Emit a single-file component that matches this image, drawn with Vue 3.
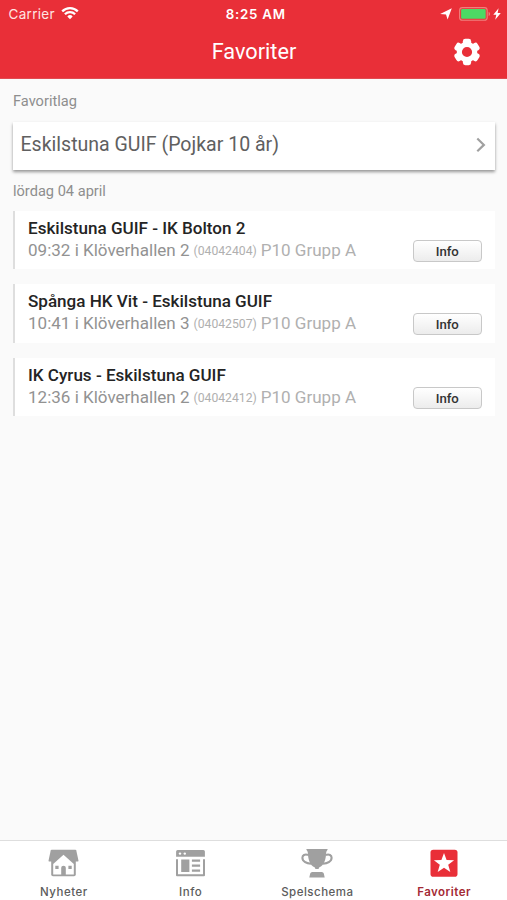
<script setup>
const matches = [
  { teams: 'Eskilstuna GUIF - IK Bolton 2', place: '09:32 i Klöverhallen 2', id: '(04042404)', group: 'P10 Grupp A' },
  { teams: 'Spånga HK Vit - Eskilstuna GUIF', place: '10:41 i Klöverhallen 3', id: '(04042507)', group: 'P10 Grupp A' },
  { teams: 'IK Cyrus - Eskilstuna GUIF', place: '12:36 i Klöverhallen 2', id: '(04042412)', group: 'P10 Grupp A' },
]
const tabs = [
  { name: 'Nyheter', icon: 'house' },
  { name: 'Info', icon: 'news' },
  { name: 'Spelschema', icon: 'trophy' },
  { name: 'Favoriter', icon: 'star', active: true },
]
</script>

<template>
  <div class="screen">
    <header class="header">
      <div class="status">
        <div class="side">
          <span class="carrier">Carrier</span>
          <svg class="wifi" width="18" height="13" viewBox="0 0 18 13">
            <path d="M9 12.2 6.3 9.4a3.9 3.9 0 0 1 5.4 0Z" fill="#fff" />
            <path d="M3.9 7.2a7.3 7.3 0 0 1 10.2 0M1.2 4.4a11.1 11.1 0 0 1 15.6 0" fill="none" stroke="#fff" stroke-width="2.3" />
          </svg>
        </div>
        <span class="time">8:25 AM</span>
        <div class="side right">
          <svg class="location" width="12" height="12" viewBox="0 0 12 12"><path d="M11.8.2 7.6 11.6 6 6.6.1 6Z" fill="#fff" /></svg>
          <svg class="battery" width="32" height="14" viewBox="0 0 32 14">
            <rect x=".6" y=".6" width="27.6" height="12.6" rx="2.8" fill="none" stroke="#f0807c" stroke-width="1.1" />
            <rect x="2.1" y="2.1" width="24.6" height="9.6" rx="1" fill="#4cd964" />
            <path d="M29.6 4.8q1.5.7 1.5 2.1t-1.5 2.1Z" fill="#f0807c" />
          </svg>
          <svg class="bolt" width="8" height="12" viewBox="0 0 8 12"><path d="M5.6.2.3 6.8h3L2.2 11.8 7.8 4.9H4.6Z" fill="#fff" /></svg>
        </div>
      </div>
      <div class="nav">
        <h1>Favoriter</h1>
        <svg class="gear" width="26" height="28" viewBox="-13 -14 26 28">
          <circle r="7.7" fill="none" stroke="#fff" stroke-width="5.2" />
          <rect v-for="n in 6" :key="n" x="-4.1" y="-13.2" width="8.2" height="7" rx="2.4" fill="#fff" :transform="`rotate(${n * 60})`" />
        </svg>
      </div>
    </header>

    <main class="content">
      <h2 class="label first">Favoritlag</h2>
      <div class="team">
        <span>Eskilstuna GUIF (Pojkar 10 år)</span>
        <svg width="10" height="16" viewBox="0 0 10 16"><path d="m1.3 1.5 6.6 6.4-6.6 6.4" fill="none" stroke="#a0a0a0" stroke-width="2.2" /></svg>
      </div>
      <h2 class="label second">lördag 04 april</h2>
      <div class="matches">
        <article v-for="m in matches" :key="m.id" class="match">
          <div>
            <div class="teams">{{ m.teams }}</div>
            <div class="details"><span class="place">{{ m.place }}</span><span class="id">{{ m.id }}</span><span class="group">{{ m.group }}</span></div>
          </div>
          <button class="info">Info</button>
        </article>
      </div>
    </main>

    <nav class="tabs">
      <div v-for="t in tabs" :key="t.name" class="tab" :class="{ active: t.active }">
        <svg width="34" height="32" viewBox="0 0 34 32">
          <template v-if="t.icon === 'house'">
            <path d="M5.2 12h24.6v15.5q0 1.8-1.8 1.8H7q-1.8 0-1.8-1.8Z" fill="#a0a0a0" />
            <path d="M5.6 2.7h23.8q.7 0 .9.7l2.2 10.3q.1.7-.6.7H3.1q-.7 0-.6-.7L4.7 3.4q.2-.7.9-.7Z" fill="#a0a0a0" />
            <path d="M17.5 7.8 27.8 17v10.4H7.2V17Z" fill="#fff" />
            <path d="M15.2 28v-7.2q0-2 2.3-2t2.3 2V28Z" fill="#a0a0a0" />
            <path d="M9.3 18.8h3.3v3.3H9.3ZM22.4 18.8h3.3v3.3h-3.3Z" fill="#a0a0a0" />
          </template>
          <template v-else-if="t.icon === 'news'">
            <path d="M3.1 4.5q0-1.5 1.5-1.5h25.8q1.5 0 1.5 1.5v5.3H3.1Z" fill="#a0a0a0" />
            <path d="M4 12.3v15.9h27V12.3" fill="none" stroke="#a0a0a0" stroke-width="2" stroke-linejoin="round" />
            <path d="M8.2 12.5h8.2v12.4H8.2ZM18.9 12.6h8.2v2.2h-8.2ZM18.9 17.6h8.2v2.2h-8.2ZM18.9 22.6h8.2v2.2h-8.2Z" fill="#a0a0a0" />
            <circle cx="7" cy="6.6" r="1.2" fill="#fff" /><circle cx="11.8" cy="6.6" r="1.2" fill="#fff" />
          </template>
          <template v-else-if="t.icon === 'trophy'">
            <path d="M8 7.9C4.8 6.9 2.4 8.2 2.4 10.8c0 3.7 4.3 5.6 8.6 5.9M26 7.9c3.2-1 5.6.3 5.6 2.9 0 3.7-4.3 5.6-8.6 5.9" fill="none" stroke="#a0a0a0" stroke-width="2.1" />
            <path d="M6.3 1.9h21.4c-.2 1.4-1.4 1.8-1.5 3.5-.3 6.6-1.8 12.3-6.6 14.9-.8.4-.9.8-.9 1.8h-3.4c0-1-.1-1.4-.9-1.8-4.800-2.600-6.300-8.300-6.600-14.900-.1-1.700-1.300-2.100-1.500-3.500Z" fill="#a0a0a0" />
            <path d="M12.2 24.9h9.6q1.6 0 2 1.5l.9 4.2H9.3l.9-4.2q.4-1.5 2-1.5Z" fill="#a0a0a0" />
          </template>
          <template v-else>
            <rect x="3.5" y="2.7" width="27" height="27" rx="2.8" fill="#e92f38" />
            <path d="m17 5.9 2.600 7.100 7.500.2-5.900 4.600 2.100 7.300-6.300-4.300-6.300 4.300 2.100-7.300-5.900-4.600 7.500-.2Z" fill="#fff" />
          </template>
        </svg>
        <span>{{ t.name }}</span>
      </div>
    </nav>
  </div>
</template>

<style>
body { margin: 0; }
</style>

<style scoped>
.screen { display: flex; flex-direction: column; width: 507px; height: 900px; overflow: hidden; background: #fafafa; font-family: Roboto, "Liberation Sans", sans-serif; }
.header { box-sizing: border-box; height: 79px; background: #e92f38; color: #fff; border-bottom: 1px solid #e14b51; }
.status { display: flex; align-items: center; height: 27px; font: 13.5px/27px Inter, sans-serif; }
.side { display: flex; flex: 1; align-items: center; padding-left: 8.5px; color: #ffe4e2; }
.carrier { letter-spacing: 0.3px; padding-top: 1px; }
.wifi { margin-left: 6px; }
.time { padding: 1px 0 0 1px; font-size: 13.3px; font-weight: 600; letter-spacing: 0.75px; margin-right: -1px; }
.right { justify-content: flex-end; padding: 0 6px 0 0; }
.battery { margin: 0 2px 0 7px; }
.nav { display: grid; grid-template-columns: 1fr auto 1fr; align-items: center; height: 50px; }
h1 { grid-column: 2; margin: 0; padding-left: 1px; font: 400 21.7px/50px Roboto, sans-serif; }
.gear { justify-self: end; margin-right: 27px; }
.content { flex: 1; padding: 0 12px 0 13px; }
.label { margin: 0; font-size: 14.6px; font-weight: 400; line-height: 20px; color: #8e8e8e; }
.first { padding: 12px 0 11px; }
.team { display: flex; align-items: center; justify-content: space-between; box-sizing: border-box; height: 48px; padding: 0 9px 3px 7.5px; background: #fff; box-shadow: 0 2px 3px rgba(0,0,0,.4); color: #606060; font-size: 19.55px; }
.second { padding: 11px 0 10px; }
.matches { display: flex; flex-direction: column; gap: 15px; }
.match { display: flex; justify-content: space-between; box-sizing: border-box; height: 58.3px; padding: 6px 13.5px 0 13px; border-left: 2px solid #dedede; background: #fff; }
.teams { font-size: 17.07px; font-weight: 500; line-height: 22px; color: #242424; }
.details { display: flex; align-items: baseline; line-height: 22px; font-size: 17.05px; white-space: nowrap; }
.place { color: #929292; }
.id { position: relative; top: -1px; margin: 0 4px; font-size: 12.2px; color: #b0b0b0; }
.group { color: #b0b0b0; }
.info { box-sizing: border-box; width: 68.5px; height: 22px; margin-top: 23px; padding: 1px 0 0; border: 1px solid #c8c8c8; border-radius: 4px; background: linear-gradient(#fff, #ececec); color: #333; font: 500 13.2px/19px Roboto, sans-serif; }
.tabs { display: flex; box-sizing: border-box; height: 60px; border-top: 1px solid #dedede; background: #fff; }
.tab { display: flex; flex: 1; flex-direction: column; align-items: center; padding-top: 6px; font: 500 11.5px/16px Inter, sans-serif; letter-spacing: .5px; color: #5c5c5c; }
.tab span { padding: 5px 0 0 1px; }
.active { color: #a32a35; font-weight: 600; }
</style>
